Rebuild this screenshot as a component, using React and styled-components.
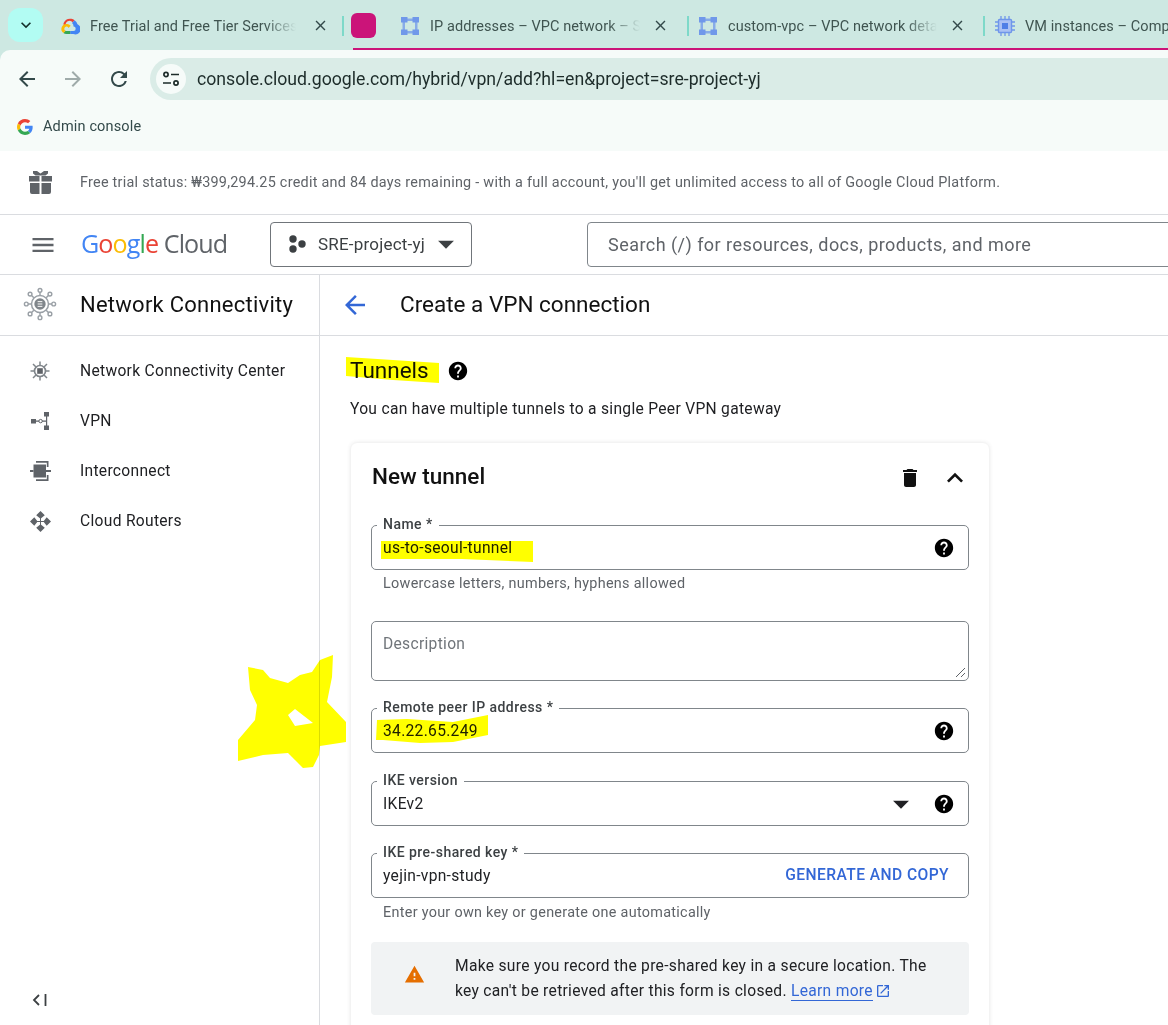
import React from 'react';
import styled, { createGlobalStyle } from 'styled-components';
import { MdHelp, MdDelete, MdExpandLess, MdArrowBack, MdArrowForward, MdMenu, MdArrowDropDown, MdWarning, MdOpenInNew, MdRefresh, MdClose, MdExpandMore } from 'react-icons/md';

const Global = createGlobalStyle`
  html, body { margin: 0; padding: 0; background: #fff; }
  body { font-family: Roboto, "Liberation Sans", sans-serif; color: #202124; }
  * { box-sizing: border-box; }
`;

const Viewport = styled.div`
  position: relative; width: 1168px; height: 1025px; overflow: hidden;
  display: flex; flex-direction: column; background: #fff;
`;
const TabStrip = styled.div`
  height: 50px; flex: none; display: flex; background: #cde8e2;
`;
const TabSearch = styled.div`
  width: 35px; height: 34px; margin: 8px 7px 0 8px; flex: none; border-radius: 12px;
  background: #b2fcf3; display: flex; align-items: center; justify-content: center; color: #13302b;
  font-size: 20px;
`;
const Tab = styled.div`
  flex: none; width: ${p => p.$w}px; height: 50px; padding: 0 0 0 10px; display: flex; align-items: center;
  color: #3f5450; font-size: 14.5px; letter-spacing: .08px; position: relative;
`;
const TabIcon = styled.div`
  width: ${p => p.$icon}px; flex: none; margin-right: ${p => p.$gap}px; display: flex; align-items: center; margin-top: 2px;
`;
const TabTitle = styled.div`
  width: ${p => p.$w}px; flex: none; white-space: nowrap; overflow: hidden; margin-top: 2px;
  ${p => p.$fade ? 'mask-image: linear-gradient(90deg, #000 85%, transparent 100%);' : ''}
`;
const TabClose = styled.div`
  flex: none; display: flex; width: 20px; justify-content: center; margin-left: ${p => p.$ml}px; color: #33494a; font-size: 17px; margin-top: 1px;
`;
const TabSep = styled.div`
  position: absolute; right: 0; top: 16px; width: 2px; height: 20px; background: #7ed9c9;
`;
const TabGroup = styled.div`
  flex: 1; display: flex; position: relative; min-width: 0; padding-left: 7px;
  &::after { content: ''; position: absolute; left: 9px; right: 0; bottom: 0; height: 2px; background: #cb1479; }
`;
const GroupChip = styled.div`
  flex: none; width: 25px; height: 25px; margin: 13px 15px 0 0; border-radius: 6px; background: #cb1479;
`;
const Toolbar = styled.div`
  height: 50px; flex: none; background: #f6fbf9; border-radius: 10px 0 0 0; display: flex; align-items: flex-start; padding: 8px 0 0 4px;
`;
const ToolbarWrap = styled.div`
  background: #cde8e2; flex: none;
`;
const NavBtn = styled.div`
  width: ${p => p.$w || 46}px; height: 42px; flex: none; display: flex; align-items: center; justify-content: center;
  color: ${p => p.$off ? '#9fabaa' : '#33494a'}; font-size: 24px;
`;
const AddressBar = styled.div`
  flex: 1; height: 42px; margin-left: 9px; margin-right: -30px; border-radius: 21px; background: #daece7; display: flex; align-items: center; padding-left: 6px;
`;
const SiteInfo = styled.div`
  width: 30px; height: 30px; border-radius: 50%; background: #f6fbf9; display: flex; align-items: center; justify-content: center; flex: none; margin-right: 11px;
`;
const Url = styled.div`
  font-size: 17.7px; color: #1d2c2a; white-space: nowrap;
`;
const Bookmarks = styled.div`
  height: 51px; flex: none; background: #f6fbf9; display: flex; align-items: center; padding: 2px 0 0 17px; gap: 10px; font-size: 14.5px; letter-spacing: .15px; color: #33494a;
`;
const TrialBar = styled.div`
  height: 64px; flex: none; display: flex; align-items: center; padding-left: 29px; border-bottom: 1px solid #dadce0;
`;
const TrialText = styled.div`
  margin-left: 28px; font-size: 14.4px; letter-spacing: .255px; color: #5f6368; white-space: nowrap; margin-top: -1px;
`;
const Header = styled.div`
  height: 60px; flex: none; display: flex; align-items: center; border-bottom: 1px solid #dadce0; padding-left: 29px;
`;
const MenuIcon = styled.div`
  width: 28px; color: #5f6368; font-size: 28px; display: flex; justify-content: center; flex: none;
`;
const Logo = styled.div`
  margin-left: 24px; width: 189px; flex: none; font-family: "Open Sans", sans-serif; font-size: 25.1px; letter-spacing: -0.9px; color: #5f6368; white-space: nowrap; margin-top: -3px;
`;
const LogoLetter = styled.span`
  color: ${p => p.$c};
`;
const ProjectButton = styled.div`
  width: 202px; height: 45px; flex: none; border: 1px solid #70757a; border-radius: 4px; display: flex; align-items: center; padding-left: 17px; font-size: 17px; letter-spacing: .2px; color: #3c4043; margin-top: -1px;
`;
const ProjectName = styled.span`
  margin-left: 12px; white-space: nowrap;
`;
const Caret = styled.span`
  display: flex; font-size: 38px; margin: 0 ${p => p.$mr || 0}px 0 ${p => p.$ml || 0}px; color: ${p => p.$c || '#3c4043'};
`;
const SearchBox = styled.div`
  margin-left: 115px; flex: none; width: 640px; height: 45px; border: 1px solid #80868b; border-radius: 4px; padding-left: 20px; display: flex; align-items: center; font-size: 18px; letter-spacing: .46px; color: #5f6368; margin-top: -1px; white-space: nowrap;
`;
const Body = styled.div`
  flex: 1; display: flex; min-height: 0;
`;
const Sidebar = styled.div`
  width: 320px; flex: none; border-right: 1px solid #dadce0; display: flex; flex-direction: column;
`;
const SideHead = styled.div`
  height: 61px; flex: none; border-bottom: 1px solid #dadce0; display: flex; align-items: center; font-size: 22px; letter-spacing: .25px; color: #111; white-space: nowrap; padding-bottom: 2px;
`;
const IconCol = styled.div`
  width: 80px; flex: none; display: flex; justify-content: center;
`;
const NavList = styled.div`
  padding-top: 10px; flex: 1; display: flex; flex-direction: column;
`;
const NavItem = styled.div`
  height: 50px; display: flex; align-items: center; font-size: 15.6px; letter-spacing: .3px; color: #202124; white-space: nowrap;
`;
const Collapse = styled.div`
  height: 50px; display: flex; align-items: center;
`;
const Main = styled.div`
  flex: 1; display: flex; flex-direction: column; min-width: 0;
`;
const PageHead = styled.div`
  height: 61px; flex: none; border-bottom: 1px solid #dadce0; display: flex; align-items: center; padding: 0 0 2px 20px; font-size: 22.5px; color: #111; white-space: nowrap;
`;
const BackIcon = styled.div`
  color: #3367d6; font-size: 30px; display: flex; width: 60px; margin: 2px 0 0 0;
`;
const Content = styled.div`
  padding: 19px 0 0 30px; flex: 1; min-height: 0;
`;
const SectionTitle = styled.div`
  display: flex; align-items: center; height: 30px; font-size: 22.5px; color: #111; gap: 18px;
`;
const TitleHelp = styled.span`
  display: flex; font-size: 22px; color: #000; margin-top: 2px;
`;
const HelpBlack = styled.span`
  display: flex; font-size: 22px; color: #000;
`;
const SectionSub = styled.div`
  margin-top: 14px; font-size: 15.6px; letter-spacing: .3px; height: 20px; line-height: 20px; color: #202124; white-space: nowrap;
`;
const Card = styled.div`
  margin-top: 24px; margin-left: 1px; width: 638px; height: 640px; border-radius: 6px; padding: 0 20px;
  box-shadow: 0 0 4px rgba(60,64,67,.16);
`;
const CardHead = styled.div`
  height: 68px; display: flex; align-items: center; font-size: 22.5px; font-weight: 500; color: #111; margin-right: -8px;
`;
const CardTitle = styled.div`
  flex: 1; margin-top: -3px; padding-left: 1px;
`;
const CardAction = styled.div`
  width: 45px; display: flex; justify-content: center; color: #111; font-size: ${p => p.$s}px; margin-top: 1px;
`;
const Field = styled.div`
  position: relative; width: 598px; height: ${p => p.$h || 45}px; border: 1px solid #80868b; border-radius: 5px; display: flex; align-items: ${p => p.$top ? 'flex-start' : 'center'}; padding: 0 13px 0 11px; margin-top: ${p => p.$mt}px; font-size: 15.6px; letter-spacing: .3px; color: #202124;
`;
const FieldLabel = styled.span`
  position: absolute; left: 5px; top: -10px; background: #fff; padding: 0 6px; font-size: 14px; letter-spacing: .45px; line-height: 16px; font-weight: 500; color: #3c4043; white-space: nowrap;
`;
const FieldValue = styled.span`
  flex: 1; white-space: nowrap; color: ${p => p.$muted ? '#70757a' : '#202124'}; ${p => p.$top ? 'margin-top: 13px;' : ''}
`;
const Hint = styled.div`
  font-size: 14.4px; letter-spacing: .29px; color: #5f6368; padding-left: 12px; margin-top: ${p => p.$mt || 5}px; height: 17px; line-height: 17px; white-space: nowrap;
`;
const ResizeGrip = styled.svg`
  position: absolute; right: 2px; bottom: 2px;
`;
const GenerateBtn = styled.span`
  color: #3367d6; font-size: 15.6px; font-weight: 500; letter-spacing: .42px; margin-right: 6px; margin-top: -2px;
`;
const Banner = styled.div`
  margin-top: 21px; width: 598px; height: 73px; background: #f1f3f4; border-radius: 4px; display: flex; align-items: center;
`;
const BannerIcon = styled.div`
  width: 84px; flex: none; display: flex; justify-content: center; color: #e56e00; font-size: 21px; margin-top: -8px; padding-left: 2px;
`;
const BannerText = styled.div`
  font-size: 15.6px; letter-spacing: .3px; line-height: 25px; color: #202124; white-space: nowrap;
`;
const LearnMore = styled.span`
  color: #3367d6; border-bottom: 1px solid #3367d6;
`;
const External = styled.span`
  color: #3367d6; font-size: 16px; margin-left: 2px; vertical-align: -3px; display: inline-flex;
`;
const Scribbles = styled.svg`
  position: absolute; left: 0; top: 0; mix-blend-mode: multiply; pointer-events: none;
`;

const GCloudIcon = () => (
  <svg width="20" height="18" viewBox="0 0 20 18">
    <path d="M12.7 5.2 14.6 3.300A7 7 0 0 0 3.300 7.200l2.600 2A4 4 0 0 1 12.700 5.200z" fill="#ea4335" />
    <path d="M17.500 7.300a7 7 0 0 0-2.900-4L12 5.900a4 4 0 0 1 1.500 3.100v.6a2.200 2.200 0 1 1 0 4.400H10.200V17h3.300a5.200 5.200 0 0 0 4-9.700z" fill="#4285f4" />
    <path d="M6.500 17h3.700v-3H6.500a2 2 0 0 1-.9-.2l-2.200 2.100a5 5 0 0 0 3.100 1.100z" fill="#34a853" />
    <path d="M6.500 7A5 5 0 0 0 3.400 16l2.200-2.200a2.200 2.200 0 1 1 2.900-2.900l2.200-2.200A5 5 0 0 0 6.500 7z" fill="#fbbc05" />
  </svg>
);
const VpcIcon = () => (
  <svg width="18" height="18" viewBox="0 0 18 18" fill="#7098ea">
    <path d="M0 0h6.500v5.500H0zM11.500 0H18v5.500h-6.500zM0 12.500h6.500V18H0zM11.500 12.500H18V18h-6.500z" />
    <path d="M6 1.500h6v2.500H6zM6 14h6v2.500H6zM1.500 5h2.500v8H1.500zM14 5h2.500v8H14z" fillOpacity=".75" />
  </svg>
);
const CpuIcon = () => (
  <svg width="20" height="20" viewBox="0 0 20 20">
    <rect x="3.500" y="3.500" width="13" height="13" rx="1" fill="#aac1f4" stroke="#6f96ea" strokeWidth="1.400" />
    <rect x="7" y="7" width="6" height="6" fill="#4f7fe6" />
    <path d="M6 0v3M10 0v3M14 0v3M6 17v3M10 17v3M14 17v3M0 6h3M0 10h3M0 14h3M17 6h3M17 10h3M17 14h3" stroke="#6f96ea" strokeWidth="1.300" />
  </svg>
);
const TuneIcon = () => (
  <svg width="18" height="16" viewBox="0 0 18 16" fill="none" stroke="#1d2c2a" strokeWidth="1.700">
    <circle cx="4" cy="3.500" r="2.100" />
    <path d="M9 3.500h8M1 12h8" />
    <circle cx="14" cy="12" r="2.100" />
  </svg>
);
const GLogo = () => (
  <svg width="16" height="16" viewBox="0 0 48 48">
    <path fill="#EA4335" d="M24 9.500c3.500 0 6.700 1.200 9.200 3.600l6.900-6.900C35.900 2.400 30.400 0 24 0 14.600 0 6.500 5.400 2.600 13.200l8 6.200C12.500 13.700 17.800 9.500 24 9.500z" />
    <path fill="#4285F4" d="M47 24.500c0-1.600-.1-3.100-.4-4.500H24v9h12.900c-.6 3-2.200 5.500-4.700 7.200l7.700 6c4.500-4.200 7.100-10.300 7.100-17.700z" />
    <path fill="#FBBC05" d="M10.500 28.600A14.500 14.500 0 0 1 9.700 24c0-1.600.3-3.100.8-4.600l-8-6.200A24 24 0 0 0 0 24c0 3.900.9 7.500 2.600 10.800l7.900-6.200z" />
    <path fill="#34A853" d="M24 48c6.500 0 11.900-2.100 15.900-5.800l-7.700-6c-2.200 1.400-4.900 2.300-8.200 2.300-6.200 0-11.500-4.200-13.400-9.900l-8 6.200C6.500 42.600 14.600 48 24 48z" />
  </svg>
);
const GiftIcon = () => (
  <svg width="23" height="24" viewBox="0 0 23 24" fill="#5f6368">
    <path d="M0 5h10.500v5.500H0zM12.500 5H23v5.500H12.500zM1 12h9.500v11H3a2 2 0 0 1-2-2zM12.500 12H22v9a2 2 0 0 1-2 2h-7.500z" />
    <path d="M4 0h4l3.500 2.500L15 0h4v2.500L16.500 4.500h-10L4 2.500z" />
  </svg>
);
const ProjectDots = () => (
  <svg width="18" height="18" viewBox="0 0 18 18" fill="#3c4043">
    <circle cx="5" cy="4" r="3.700" />
    <circle cx="5" cy="14" r="3.700" />
    <circle cx="14" cy="9" r="3.700" />
  </svg>
);
const HubIcon = () => (
  <svg width="34" height="34" viewBox="0 0 36 36" fill="none" stroke="#9aa0a6" strokeWidth="1.500">
    <circle cx="18" cy="18" r="9" strokeWidth="1.600" />
    <circle cx="18" cy="18" r="6" fill="#80868b" stroke="none" />
    <path d="M15.500 15.500h5M15.500 18h5M15.500 20.500h5" stroke="#fff" strokeWidth="1" />
    <path d="M18 9V5.500M18 27v3.500M9 18H5.500M27 18h3.500M11.500 11.500l-3-3M24.500 11.500l3-3M11.500 24.500l-3 3M24.500 24.500l3 3" />
    <circle cx="18" cy="3.500" r="2" /><circle cx="18" cy="32.500" r="2" />
    <circle cx="3.500" cy="18" r="2" /><circle cx="32.500" cy="18" r="2" />
    <circle cx="7.500" cy="7.500" r="2" /><circle cx="28.500" cy="7.500" r="2" />
    <circle cx="7.500" cy="28.500" r="2" /><circle cx="28.500" cy="28.500" r="2" />
  </svg>
);
const NccIcon = () => (
  <svg width="20" height="20" viewBox="0 0 20 20" fill="none" stroke="#80868b" strokeWidth="1.500">
    <circle cx="10" cy="10" r="5.500" strokeWidth="1.700" />
    <rect x="7.200" y="7.200" width="5.600" height="5.600" fill="#5f6368" stroke="none" />
    <path d="M10 4.500V.5M10 15.500v4M4.500 10h-4M15.500 10h4M6 6 3 3M14 6l3-3M6 14l-3 3M14 14l3 3" />
  </svg>
);
const VpnIcon = () => (
  <svg width="20" height="20" viewBox="0 0 20 20" fill="#5f6368">
    <rect x="1" y="8" width="5" height="4.500" />
    <rect x="14" y="1" width="5" height="4.500" />
    <rect x="14" y="14.500" width="5" height="4.500" />
    <path d="M6 9.500h3v1.200H6zM12.200 9.500h3.800v1.200h-3.800z" />
    <path d="M16 5h1.200v10H16z" />
    <circle cx="10.600" cy="10.100" r="1.700" fill="none" stroke="#5f6368" strokeWidth="1" />
  </svg>
);
const InterIcon = () => (
  <svg width="21" height="20" viewBox="0 0 21 20" fill="#5f6368">
    <rect x="3.500" y="3.500" width="12.500" height="13" />
    <path d="M0 9h3.500v2H0zM16 9h5v2h-5z" />
    <path d="M6 0h12.500v6h-1.700V1.700H6zM6 18.300h10.800V14h1.700v6H6z" />
  </svg>
);
const RouterIcon = () => (
  <svg width="21" height="21" viewBox="0 0 22 22" fill="#5f6368">
    <path d="M11 0l4.500 4.500-4.500 3.500-4.500-3.500zM11 22l-4.500-4.500 4.500-3.500 4.500 3.500zM0 11l4.500-4.500L8 11l-3.500 4.500zM22 11l-4.500 4.500L14 11l3.500-4.500z" />
    <path d="M10.500 6h1v10h-1zM6 10.500h10v1H6z" />
  </svg>
);
const CollapseIcon = () => (
  <svg width="16" height="12" viewBox="0 0 16 12" fill="none" stroke="#3c4043" strokeWidth="1.800">
    <path d="M7 1 2 6l5 5M13.500 0v12" />
  </svg>
);

const tabs = [
  { w: 294, icon: <GCloudIcon />, iw: 20, gap: 10, title: 'Free Trial and Free Tier Services', tw: 206, ml: 14 },
  { w: 298, icon: <VpcIcon />, iw: 18, gap: 11, title: 'IP addresses – VPC network – SRE-project-yj', tw: 210, ml: 10 },
  { w: 296, icon: <VpcIcon />, iw: 18, gap: 11, title: 'custom-vpc – VPC network details', tw: 209, ml: 10 },
];

export default function App() {
  return (
    <Viewport>
      <Global />
      <TabStrip>
        <TabSearch><MdExpandMore /></TabSearch>
        <Tab $w={tabs[0].w}>
          <TabIcon $icon={tabs[0].iw} $gap={tabs[0].gap}>{tabs[0].icon}</TabIcon>
          <TabTitle $w={tabs[0].tw} $fade>{tabs[0].title}</TabTitle>
          <TabClose $ml={tabs[0].ml}><MdClose /></TabClose>
          <TabSep />
        </Tab>
        <TabGroup>
          <GroupChip />
          {tabs.slice(1).map(t => (
            <Tab key={t.title} $w={t.w}>
              <TabIcon $icon={t.iw} $gap={t.gap}>{t.icon}</TabIcon>
              <TabTitle $w={t.tw} $fade>{t.title}</TabTitle>
              <TabClose $ml={t.ml}><MdClose /></TabClose>
              <TabSep />
            </Tab>
          ))}
          <Tab $w={200}>
            <TabIcon $icon={20} $gap={10}><CpuIcon /></TabIcon>
            <TabTitle $w={170}>VM instances – Compute Engine</TabTitle>
          </Tab>
        </TabGroup>
      </TabStrip>
      <ToolbarWrap>
        <Toolbar>
          <NavBtn><MdArrowBack /></NavBtn>
          <NavBtn $off><MdArrowForward /></NavBtn>
          <NavBtn $w={45}><MdRefresh /></NavBtn>
          <AddressBar>
            <SiteInfo><TuneIcon /></SiteInfo>
            <Url>console.cloud.google.com/hybrid/vpn/add?hl=en&amp;project=sre-project-yj</Url>
          </AddressBar>
        </Toolbar>
      </ToolbarWrap>
      <Bookmarks><GLogo />Admin console</Bookmarks>
      <TrialBar>
        <GiftIcon />
        <TrialText>Free trial status: ₩399,294.25 credit and 84 days remaining - with a full account, you'll get unlimited access to all of Google Cloud Platform.</TrialText>
      </TrialBar>
      <Header>
        <MenuIcon><MdMenu /></MenuIcon>
        <Logo>
          <LogoLetter $c="#4285f4">G</LogoLetter>
          <LogoLetter $c="#ea4335">o</LogoLetter>
          <LogoLetter $c="#fbbc05">o</LogoLetter>
          <LogoLetter $c="#4285f4">g</LogoLetter>
          <LogoLetter $c="#34a853">l</LogoLetter>
          <LogoLetter $c="#ea4335">e</LogoLetter> Cloud
        </Logo>
        <ProjectButton>
          <ProjectDots />
          <ProjectName>SRE-project-yj</ProjectName>
          <Caret $ml={2}><MdArrowDropDown /></Caret>
        </ProjectButton>
        <SearchBox>Search (/) for resources, docs, products, and more</SearchBox>
      </Header>
      <Body>
        <Sidebar>
          <SideHead><IconCol><HubIcon /></IconCol>Network Connectivity</SideHead>
          <NavList>
            <NavItem><IconCol><NccIcon /></IconCol>Network Connectivity Center</NavItem>
            <NavItem><IconCol><VpnIcon /></IconCol>VPN</NavItem>
            <NavItem><IconCol><InterIcon /></IconCol>Interconnect</NavItem>
            <NavItem><IconCol><RouterIcon /></IconCol>Cloud Routers</NavItem>
          </NavList>
          <Collapse><IconCol><CollapseIcon /></IconCol></Collapse>
        </Sidebar>
        <Main>
          <PageHead><BackIcon><MdArrowBack /></BackIcon>Create a VPN connection</PageHead>
          <Content>
            <SectionTitle>Tunnels <TitleHelp><MdHelp /></TitleHelp></SectionTitle>
            <SectionSub>You can have multiple tunnels to a single Peer VPN gateway</SectionSub>
            <Card>
              <CardHead>
                <CardTitle>New tunnel</CardTitle>
                <CardAction $s={24}><MdDelete /></CardAction>
                <CardAction $s={32}><MdExpandLess /></CardAction>
              </CardHead>
              <Field $mt={14}>
                <FieldLabel>Name *</FieldLabel>
                <FieldValue>us-to-seoul-tunnel</FieldValue>
                <HelpBlack><MdHelp /></HelpBlack>
              </Field>
              <Hint>Lowercase letters, numbers, hyphens allowed</Hint>
              <Field $mt={29} $h={60} $top>
                <FieldValue $muted $top>Description</FieldValue>
                <ResizeGrip width="12" height="12" viewBox="0 0 12 12" fill="none" stroke="#5f6368" strokeWidth="1"><path d="M2 11 11 2M7 11l4-4" /></ResizeGrip>
              </Field>
              <Field $mt={27}>
                <FieldLabel>Remote peer IP address *</FieldLabel>
                <FieldValue>34.22.65.249</FieldValue>
                <HelpBlack><MdHelp /></HelpBlack>
              </Field>
              <Field $mt={28}>
                <FieldLabel>IKE version</FieldLabel>
                <FieldValue>IKEv2</FieldValue>
                <Caret $mr={13} $c="#202124"><MdArrowDropDown /></Caret>
                <HelpBlack><MdHelp /></HelpBlack>
              </Field>
              <Field $mt={27}>
                <FieldLabel>IKE pre-shared key *</FieldLabel>
                <FieldValue>yejin-vpn-study</FieldValue>
                <GenerateBtn>GENERATE AND COPY</GenerateBtn>
              </Field>
              <Hint $mt={6}>Enter your own key or generate one automatically</Hint>
              <Banner>
                <BannerIcon><MdWarning /></BannerIcon>
                <BannerText>
                  Make sure you record the pre-shared key in a secure location. The<br />
                  key can't be retrieved after this form is closed. <LearnMore>Learn more</LearnMore>
                  <External><MdOpenInNew /></External>
                </BannerText>
              </Banner>
            </Card>
          </Content>
        </Main>
      </Body>
      <Scribbles width="1168" height="1025" viewBox="0 0 1168 1025" fill="#ffff00">
        <path d="M346 357 393 360 439 363 439 383 393 380 346 376Z" />
        <path d="M381 541 533 541 533 562 462 559 381 559Z" />
        <path d="M377 720 407 719 453 722 488 715 488 735 453 742 420 743 383 740 376 740Z" />
        <path fillRule="evenodd" d="M248 667 263 670 270 678 288 683 300 675 312 672 320 660 333 655 332 677 327 702 346 722 346 742 320 746 319 755 313 767 303 768 295 760 288 753 263 755 238 761 238 740 255 720 257 705 250 690Z M288 715 295 709 313 723 295 726Z" />
      </Scribbles>
    </Viewport>
  );
}
